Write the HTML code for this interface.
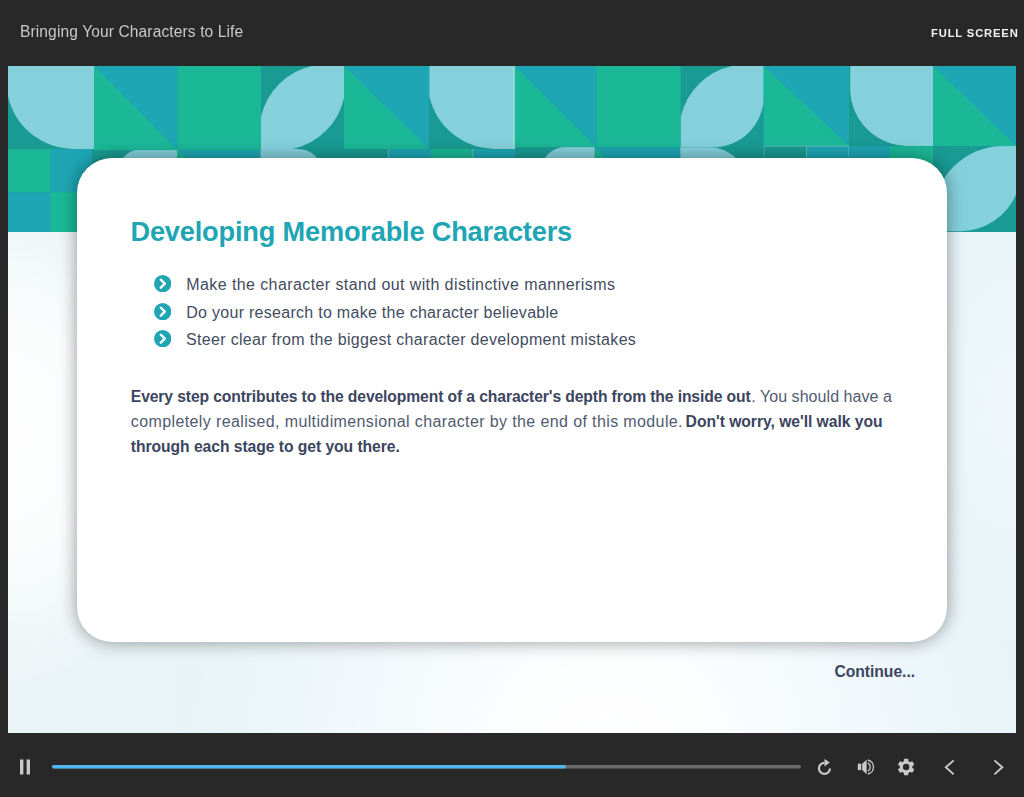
<!DOCTYPE html>
<html>
<head>
<meta charset="utf-8">
<title>Bringing Your Characters to Life</title>
<style>
html,body{margin:0;padding:0;}
body{width:1024px;height:797px;background:#282828;position:relative;overflow:hidden;font-family:"Liberation Sans",sans-serif;}
#title{position:absolute;color:#c8c8c8;white-space:nowrap;will-change:transform;}
#fs{position:absolute;color:#f2f2f2;white-space:nowrap;will-change:transform;}
#slide{position:absolute;left:8px;top:66px;width:1008px;height:667px;overflow:hidden;background:#e8f4f9;}
#bg{position:absolute;left:0;top:0;width:1008px;height:667px;
 background:
  radial-gradient(ellipse 430px 460px at 600px 700px, rgba(255,255,255,1) 0%, rgba(255,255,255,0.92) 22%, rgba(255,255,255,0.45) 60%, rgba(255,255,255,0) 100%),
  radial-gradient(ellipse 160px 250px at 10px 370px, rgba(255,255,255,0.95) 0%, rgba(255,255,255,0.8) 45%, rgba(255,255,255,0) 100%),
  radial-gradient(ellipse 120px 260px at 1000px 340px, rgba(255,255,255,0.4), rgba(255,255,255,0) 100%),
  linear-gradient(to right, #ebf4f6 0px, #e6f3f8 300px);}
#banner{position:absolute;left:0;top:0;}
#card{position:absolute;left:69px;top:92px;width:870px;height:484px;background:#fff;border-radius:35px;box-shadow:0 0 18px rgba(0,0,0,0.40);}
.tx{position:absolute;font-size:16.3px;line-height:20px;color:#434c60;white-space:nowrap;}
.tx.h1{font-size:26.7px;line-height:32px;font-weight:bold;color:#20a5b4;}
.tx.r{color:#515b70;}
.tx.b{color:#3c4560;font-weight:bold;}
.bu{position:absolute;left:145.6px;width:17.4px;height:17.4px;}
#s_title{left:122.44px;top:149.30px;font-size:27.2px;line-height:34px;letter-spacing:-0.184px;font-weight:bold;}
#s_li1{left:178.32px;top:208.80px;font-size:16.0px;line-height:20px;letter-spacing:0.404px;font-weight:normal;}
#s_li2{left:178.24px;top:236.60px;font-size:16.0px;line-height:20px;letter-spacing:0.283px;font-weight:normal;}
#s_li3{left:178.06px;top:263.90px;font-size:16.0px;line-height:20px;letter-spacing:0.319px;font-weight:normal;}
#s_p1a{left:122.81px;top:320.70px;font-size:15.7px;line-height:20px;letter-spacing:-0.117px;font-weight:bold;}
#s_p1b{left:743.24px;top:320.70px;font-size:16.0px;line-height:20px;letter-spacing:0.055px;font-weight:normal;}
#s_p2a{left:122.79px;top:346.00px;font-size:16.0px;line-height:20px;letter-spacing:0.383px;font-weight:normal;}
#s_p2b{left:677.61px;top:346.00px;font-size:15.7px;line-height:20px;letter-spacing:-0.042px;font-weight:bold;}
#s_p3{left:122.79px;top:370.80px;font-size:15.7px;line-height:20px;letter-spacing:-0.057px;font-weight:bold;}
#s_cont{left:826.40px;top:596.00px;font-size:15.7px;line-height:20px;letter-spacing:-0.03px;font-weight:bold;}
#title{left:19.65px;top:22.00px;font-size:15.6px;line-height:20px;letter-spacing:0.098px;font-weight:normal;}
#fs{left:931.07px;top:25.90px;font-size:11.2px;line-height:14px;letter-spacing:0.867px;font-weight:bold;}

#ctrl{position:absolute;left:0;top:733px;width:1024px;height:64px;}
</style>
</head>
<body>
<div id="title">Bringing Your Characters to Life</div>
<div id="fs">FULL SCREEN</div>
<div id="slide">
<div id="bg"></div>
<svg id="banner" width="1008" height="166" viewBox="8 66 1008 166">
<rect x="8" y="66" width="1008" height="166.2" fill="#199b93"/>
<rect x="8" y="148.9" width="42.4" height="43.3" fill="#1bb898"/>
<rect x="50.4" y="148.9" width="41.6" height="43.3" fill="#1ea6b4"/>
<rect x="8" y="192.2" width="42.4" height="40.0" fill="#1ea6b4"/>
<rect x="50.4" y="192.2" width="41.6" height="40.0" fill="#1bb898"/>
<rect x="92" y="148.9" width="85.5" height="83.3" fill="#199b93"/>
<path d="M117.1 232.2V173.9A25 25 0 0 1 142.1 148.9H177.5V232.2Z" fill="#84d1dc"/>
<rect x="177.5" y="148.9" width="83.5" height="83.3" fill="#1ea6b4"/>
<path d="M177.5 148.9L261 232.2L177.5 232.2Z" fill="#1bb898"/>
<rect x="260.5" y="148.9" width="83.5" height="83.3" fill="#199b93"/>
<path d="M260.5 148.9H298.3A24 24 0 0 1 322.3 172.9V232.2H260.5Z" fill="#84d1dc"/>
<rect x="344" y="148.9" width="44.3" height="42.9" fill="#199b93"/>
<rect x="388.3" y="148.9" width="42.7" height="42.9" fill="#1ea6b4"/>
<rect x="344" y="191.8" width="44.3" height="40.4" fill="#1ea6b4"/>
<rect x="388.3" y="191.8" width="42.7" height="40.4" fill="#199b93"/>
<rect x="431" y="148.9" width="42" height="42.9" fill="#1bb898"/>
<rect x="473" y="148.9" width="42" height="42.9" fill="#1ea6b4"/>
<rect x="431" y="191.8" width="42" height="40.4" fill="#1ea6b4"/>
<rect x="473" y="191.8" width="42" height="40.4" fill="#1bb898"/>
<rect x="515" y="147.1" width="79.8" height="85.1" fill="#199b93"/>
<path d="M540.3 232.2V172.1A25 25 0 0 1 565.3 147.1H594.8V232.2Z" fill="#84d1dc"/>
<rect x="594.8" y="147.1" width="86.2" height="85.1" fill="#1ea6b4"/>
<path d="M594.8 147.1L681 232.2L594.8 232.2Z" fill="#1bb898"/>
<rect x="680.3" y="147.1" width="83.7" height="85.1" fill="#199b93"/>
<path d="M680.3 147.1H707.8A42.5 42.5 0 0 1 750.3 189.6V232.2H680.3Z" fill="#84d1dc"/>
<rect x="764" y="146.1" width="42.4" height="42.9" fill="#199b93"/>
<rect x="806.4" y="146.1" width="42.1" height="42.9" fill="#1ea6b4"/>
<rect x="764" y="189" width="42.4" height="43.2" fill="#1ea6b4"/>
<rect x="806.4" y="189" width="42.1" height="43.2" fill="#199b93"/>
<rect x="848.5" y="146.1" width="41.7" height="42.9" fill="#1ea6b4"/>
<rect x="890.2" y="146.1" width="42.8" height="42.9" fill="#1bb898"/>
<rect x="848.5" y="189" width="41.7" height="43.2" fill="#1bb898"/>
<rect x="890.2" y="189" width="42.8" height="43.2" fill="#1ea6b4"/>
<rect x="933.1" y="145.9" width="83.0" height="86.3" fill="#199b93"/>
<path d="M933.1 215.4A70.3 70.3 0 0 1 1003.2 145.9H1016.1V194.5A61 61 0 0 1 961.7 231.2H933.1Z" fill="#84d1dc"/>
<rect x="8" y="66" width="86" height="82.9" fill="#199b93"/>
<path d="M8 66L94 66L94 148.9L73.70 148.9A67.3 67.3 0 0 1 8 96.19Z" fill="#84d1dc"/>
<rect x="94" y="66" width="83.5" height="84.1" fill="#1ea6b4"/>
<path d="M94 66L177.5 150.1L94 150.1Z" fill="#1bb898"/>
<rect x="177.5" y="66" width="83.5" height="84.1" fill="#1bb898"/>
<rect x="261" y="66" width="83" height="82.9" fill="#199b93"/>
<path d="M261 117.02A67.2 67.2 0 0 1 312.02 66L344 66L344 97.88A67.2 67.2 0 0 1 292.98 148.9L261 148.9Z" fill="#84d1dc"/>
<rect x="344" y="66" width="85.4" height="82.9" fill="#1ea6b4"/>
<path d="M344 66L429.4 148.9L344 148.9Z" fill="#1bb898"/>
<rect x="429.4" y="66" width="85.3" height="82.9" fill="#199b93"/>
<path d="M429.4 66L514.7 66L514.7 148.9L495.10 148.9A67.3 67.3 0 0 1 429.4 96.19Z" fill="#84d1dc"/>
<rect x="514.7" y="66" width="81.8" height="81.1" fill="#1ea6b4"/>
<path d="M514.7 66L596.5 147.1L514.7 147.1Z" fill="#1bb898"/>
<rect x="596.5" y="66" width="84.3" height="81.1" fill="#1bb898"/>
<rect x="680.8" y="66" width="83.1" height="81.5" fill="#199b93"/>
<path d="M680.8 117.02A67.2 67.2 0 0 1 731.82 66L763.9 66L763.9 96.10A51.4 51.4 0 0 1 712.50 147.5L680.8 147.5Z" fill="#84d1dc"/>
<rect x="763.7" y="66" width="85.3" height="80.1" fill="#1ea6b4"/>
<path d="M763.7 66L849 146.1L763.7 146.1Z" fill="#1bb898"/>
<rect x="849" y="66" width="84.2" height="80.1" fill="#199b93"/>
<path d="M850.2 66H933.2V145.9H907.5A57.3 57.3 0 0 1 850.2 88.6Z" fill="#84d1dc"/>
<rect x="933.2" y="66" width="82.8" height="80.1" fill="#1ea6b4"/>
<path d="M933.2 66L1016 146.1L933.2 146.1Z" fill="#1bb898"/>
<rect x="513.7" y="66" width="1" height="83" fill="#fff" opacity="0.55"/>
<rect x="764" y="145.6" width="84.5" height="1" fill="#fff" opacity="0.28"/>
<rect x="763.6" y="146" width="1" height="12" fill="#fff" opacity="0.22"/>
<rect x="805.9" y="146" width="1" height="12" fill="#fff" opacity="0.3"/>
<rect x="847.9" y="146" width="1" height="12" fill="#fff" opacity="0.25"/>
<rect x="387.8" y="149" width="1" height="9" fill="#fff" opacity="0.3"/>
<rect x="472.5" y="149" width="1" height="9" fill="#fff" opacity="0.3"/>
</svg>
<div id="card"></div>
<div class="tx h1" id="s_title">Developing Memorable Characters</div>
<svg class="bu" style="top:208.9px" viewBox="0 0 17 17"><circle cx="8.5" cy="8.5" r="8.5" fill="#20a5b4"/><path d="M6.6 4.6L10.6 8.5L6.6 12.4" fill="none" stroke="#fff" stroke-width="2.3" stroke-linecap="round" stroke-linejoin="round"/></svg>
<svg class="bu" style="top:236.8px" viewBox="0 0 17 17"><circle cx="8.5" cy="8.5" r="8.5" fill="#20a5b4"/><path d="M6.6 4.6L10.6 8.5L6.6 12.4" fill="none" stroke="#fff" stroke-width="2.3" stroke-linecap="round" stroke-linejoin="round"/></svg>
<svg class="bu" style="top:263.9px" viewBox="0 0 17 17"><circle cx="8.5" cy="8.5" r="8.5" fill="#20a5b4"/><path d="M6.6 4.6L10.6 8.5L6.6 12.4" fill="none" stroke="#fff" stroke-width="2.3" stroke-linecap="round" stroke-linejoin="round"/></svg>
<div class="tx" id="s_li1">Make the character stand out with distinctive mannerisms</div>
<div class="tx" id="s_li2">Do your research to make the character believable</div>
<div class="tx" id="s_li3">Steer clear from the biggest character development mistakes</div>
<div class="tx b" id="s_p1a">Every step contributes to the development of a character's depth from the inside out</div>
<div class="tx r" id="s_p1b">. You should have a</div>
<div class="tx r" id="s_p2a">completely realised, multidimensional character by the end of this module.</div>
<div class="tx b" id="s_p2b">Don't worry, we'll walk you</div>
<div class="tx b" id="s_p3">through each stage to get you there.</div>
<div class="tx b" id="s_cont">Continue...</div>
</div>
<svg id="ctrl" width="1024" height="64" viewBox="0 733 1024 64">
<g fill="#c9c9c9">
<rect x="20" y="759.5" width="3.4" height="15"/><rect x="26.6" y="759.5" width="3.4" height="15"/>
</g>
<rect x="52" y="765" width="749" height="3.4" rx="1.7" fill="#6b6b6b"/>
<rect x="52" y="765" width="514" height="3.4" rx="1.7" fill="#4eb7ef"/>
<!-- replay -->
<path d="M824.45 762.9A5.5 5.5 0 1 0 829.95 768.4" fill="none" stroke="#c9c9c9" stroke-width="2.2"/>
<path d="M824.45 759V766.6L829.9 762.6Z" fill="#c9c9c9"/>
<!-- volume -->
<g fill="#c9c9c9"><rect x="857.8" y="763.7" width="3.4" height="6.4"/><path d="M862.2 763.7L866.6 759.8V774.2L862.2 770.1Z"/></g>
<path d="M867.8 762.9A4.65 4.65 0 0 1 867.8 771.1" fill="none" stroke="#c9c9c9" stroke-width="1.3"/>
<path d="M867.8 760A7.15 7.15 0 0 1 867.8 774" fill="none" stroke="#c9c9c9" stroke-width="1.3"/>
<!-- gear -->
<g transform="translate(906.1 767)"><circle r="4.7" fill="none" stroke="#c9c9c9" stroke-width="3.2"/>
<g fill="#c9c9c9"><rect x="-2.2" y="-8.3" width="4.4" height="16.6" rx="0.9"/><rect x="-2.2" y="-8.3" width="4.4" height="16.6" rx="0.9" transform="rotate(60)"/><rect x="-2.2" y="-8.3" width="4.4" height="16.6" rx="0.9" transform="rotate(120)"/></g>
<circle r="3.2" fill="#282828"/></g>
<!-- chevrons -->
<path d="M953.7 760.4L945.8 767.3L953.7 774.4" fill="none" stroke="#c9c9c9" stroke-width="1.9"/>
<path d="M994.4 760.4L1002.3 767.3L994.4 774.4" fill="none" stroke="#c9c9c9" stroke-width="1.9"/>
</svg>
</body>
</html>
